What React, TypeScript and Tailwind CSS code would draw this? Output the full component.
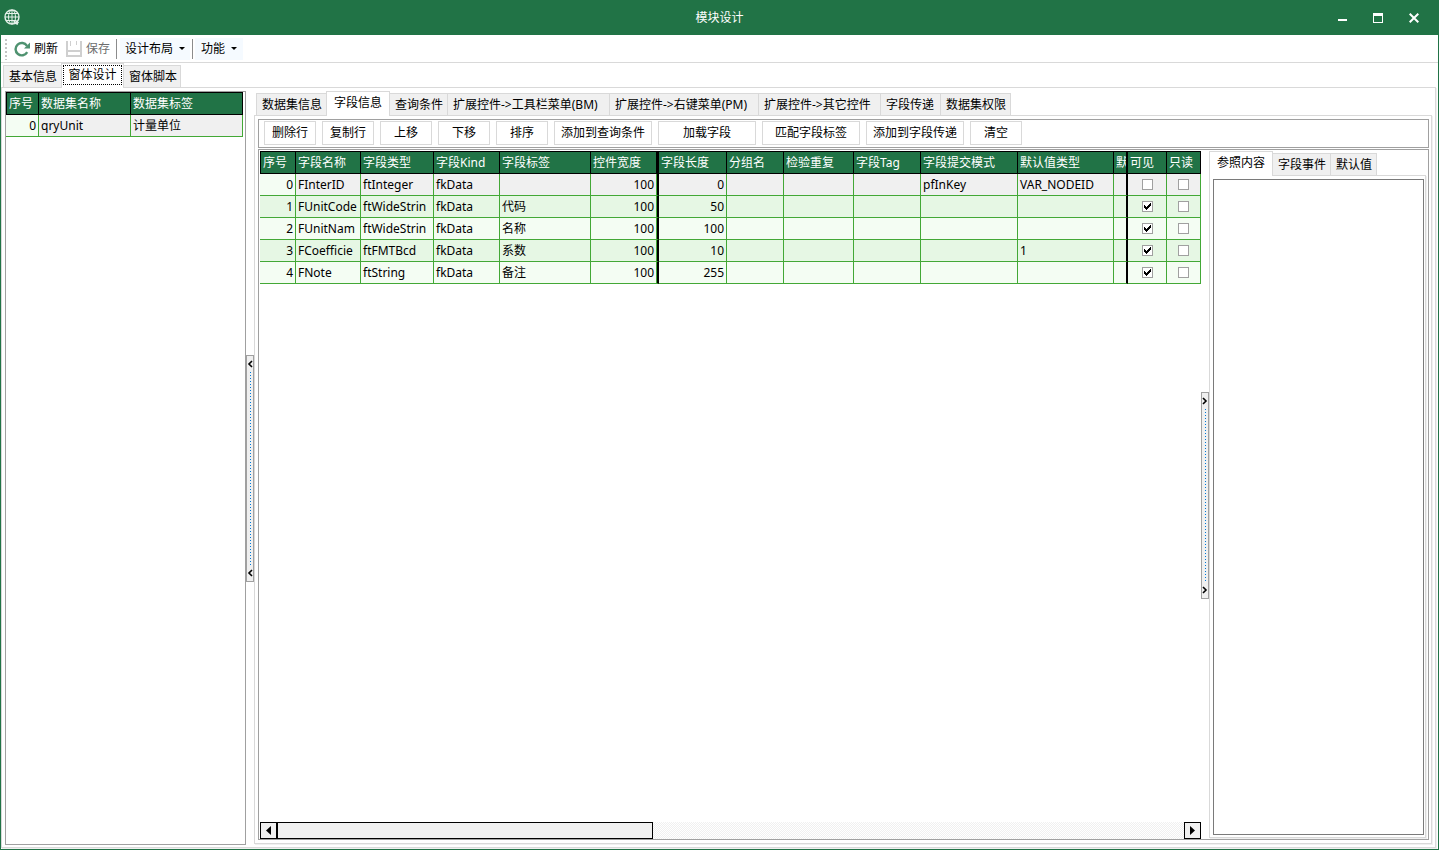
import type { ReactNode } from 'react';

interface Tab {
  label: string;
  width: string;
}

interface Column {
  key: string;
  title: string;
  width: number;
  align?: 'right' | 'center';
  divider?: 'thick' | 'double';
}

interface Field {
  [key: string]: string | number | boolean | undefined;
}

const pageTabs: Tab[] = [
  { label: '基本信息', width: 'w-[58px]' },
  { label: '窗体设计', width: 'w-[63px]' },
  { label: '窗体脚本', width: 'w-[57px]' },
];

const dataTabs: Tab[] = [
  { label: '数据集信息', width: 'w-[70px]' },
  { label: '字段信息', width: 'w-[64px]' },
  { label: '查询条件', width: 'w-[58px]' },
  { label: '扩展控件->工具栏菜单(BM)', width: 'w-[162px]' },
  { label: '扩展控件->右键菜单(PM)', width: 'w-[149px]' },
  { label: '扩展控件->其它控件', width: 'w-[122px]' },
  { label: '字段传递', width: 'w-[60px]' },
  { label: '数据集权限', width: 'w-[70px]' },
];

const detailTabs: Tab[] = [
  { label: '参照内容', width: 'w-[64px]' },
  { label: '字段事件', width: 'w-[58px]' },
  { label: '默认值', width: 'w-[46px]' },
];

const actions = [
  { label: '删除行' },
  { label: '复制行' },
  { label: '上移' },
  { label: '下移' },
  { label: '排序' },
  { label: '添加到查询条件', wide: true },
  { label: '加载字段', wide: true },
  { label: '匹配字段标签', wide: true },
  { label: '添加到字段传递', wide: true },
  { label: '清空' },
];

const columns: Column[] = [
  { key: 'no', title: '序号', width: 36, align: 'right' },
  { key: 'name', title: '字段名称', width: 65 },
  { key: 'type', title: '字段类型', width: 73 },
  { key: 'kind', title: '字段Kind', width: 66 },
  { key: 'label', title: '字段标签', width: 91 },
  { key: 'ctrlWidth', title: '控件宽度', width: 68, align: 'right', divider: 'double' },
  { key: 'length', title: '字段长度', width: 68, align: 'right' },
  { key: 'group', title: '分组名', width: 57 },
  { key: 'repeat', title: '检验重复', width: 70 },
  { key: 'tag', title: '字段Tag', width: 67 },
  { key: 'submit', title: '字段提交模式', width: 97 },
  { key: 'defType', title: '默认值类型', width: 96 },
  { key: 'def', title: '默', width: 14, divider: 'thick' },
  { key: 'visible', title: '可见', width: 39, align: 'center' },
  { key: 'readonly', title: '只读', width: 34, align: 'center' },
];

const fields: Field[] = [
  { no: 0, name: 'FInterID', type: 'ftInteger', kind: 'fkData', ctrlWidth: 100, length: 0, submit: 'pfInKey', defType: 'VAR_NODEID', visible: false, readonly: false },
  { no: 1, name: 'FUnitCode', type: 'ftWideStrin', kind: 'fkData', label: '代码', ctrlWidth: 100, length: 50, visible: true, readonly: false },
  { no: 2, name: 'FUnitNam', type: 'ftWideStrin', kind: 'fkData', label: '名称', ctrlWidth: 100, length: 100, visible: true, readonly: false },
  { no: 3, name: 'FCoefficie', type: 'ftFMTBcd', kind: 'fkData', label: '系数', ctrlWidth: 100, length: 10, defType: '1', visible: true, readonly: false },
  { no: 4, name: 'FNote', type: 'ftString', kind: 'fkData', label: '备注', ctrlWidth: 100, length: 255, visible: true, readonly: false },
];

function Tabs({ tabs, active, focused = false }: { tabs: Tab[]; active: number; focused?: boolean }) {
  return (
    <div role="tablist" className="relative z-10 -mb-px flex h-[25px] items-end">
      {tabs.map((tab, i) => (
        <button
          key={tab.label}
          role="tab"
          aria-selected={i === active}
          className={`${tab.width} shrink-0 border-[#d9d9d9] text-left whitespace-nowrap ${
            i === active
              ? `h-[25px] border-x border-t bg-white pt-px pb-[3px] ${focused ? 'px-px' : 'pl-[7px]'}`
              : `h-[23px] border-y bg-[#f0f0f0] pt-px pl-[5px] ${i < active ? 'border-l' : 'border-r'}`
          }`}
        >
          {i === active && focused ? (
            <span className="flex h-full items-center justify-center border border-dotted border-black">{tab.label}</span>
          ) : (
            tab.label
          )}
        </button>
      ))}
    </div>
  );
}

function TabPage({ className = '', children }: { className?: string; children: ReactNode }) {
  return (
    <div className={`flex min-h-0 flex-1 border border-[#d9d9d9] shadow-[1px_1px_0_#f0f0f0] ${className}`}>{children}</div>
  );
}

function Splitter({ dir, height }: { dir: 'left' | 'right'; height: string }) {
  const arrow = (
    <svg width="6" height="8" viewBox="0 0 6 8" fill="none" stroke="#000" strokeWidth="1.6">
      <path d={dir === 'left' ? 'M5 1 L2 4 L5 7' : 'M1 1 L4 4 L1 7'} />
    </svg>
  );
  return (
    <div className="flex w-2 shrink-0 items-center">
      <div className={`${height} flex w-2 flex-col items-center justify-between border border-[#a0a0a0] bg-[#f0f0f0] py-1`}>
        {arrow}
        <svg className="my-1 min-h-0 w-px flex-1" aria-hidden="true">
          <line x1="0.5" y1="0" x2="0.5" y2="100%" stroke="#0078d7" strokeDasharray="1 2" />
        </svg>
        {arrow}
      </div>
    </div>
  );
}

function CheckBox({ checked, label }: { checked: boolean; label: string }) {
  return (
    <span className="relative mx-auto block size-[11px]">
      <input
        type="checkbox"
        defaultChecked={checked}
        aria-label={label}
        className="peer block size-[11px] appearance-none border border-[#a0a0a0] bg-white"
      />
      <svg
        className="pointer-events-none absolute inset-0 hidden peer-checked:block"
        width="11"
        height="11"
        viewBox="0 0 11 11"
        shapeRendering="crispEdges"
      >
        <path d="M2 4h1v1h1v1h1v-1h1v-1h1v-1h1v-1h1v3h-1v1h-1v1h-1v1h-1v1h-1v-1h-1v-1h-1z" fill="#000" />
      </svg>
    </span>
  );
}

function DatasetList() {
  return (
    <div className="w-[241px] shrink-0 border border-[#a0a0a0]">
      <table className="w-[237px] table-fixed border-separate border-spacing-0">
        <colgroup>
          <col className="w-[33px]" />
          <col className="w-[92px]" />
          <col className="w-[112px]" />
        </colgroup>
        <thead className="bg-[#217346] text-left text-white">
          <tr>
            {['序号', '数据集名称', '数据集标签'].map((title, i) => (
              <th key={title} className={`h-[23px] border-y border-r border-black pl-0.5 font-normal ${i === 0 ? 'border-l' : ''}`}>
                {title}
              </th>
            ))}
          </tr>
        </thead>
        <tbody>
          <tr className="bg-[#f0f0f0]">
            <td className="h-[22px] border-r border-b border-[#43a836] bg-[#f4fdf3] pr-0.5 text-right">0</td>
            <td className="border-r border-b border-[#43a836] pl-0.5">qryUnit</td>
            <td className="border-r border-b border-[#43a836] pl-0.5">计量单位</td>
          </tr>
        </tbody>
      </table>
    </div>
  );
}

function FieldCell({ col, row, index }: { col: Column; row: Field; index: number }) {
  const value = row[col.key];
  const bg = index % 2 ? 'bg-[#e6f7e4]' : index === 0 && col.key !== 'no' ? 'bg-[#f0f0f0]' : 'bg-[#f4fdf3]';
  const align = col.align === 'right' ? 'text-right' : col.align === 'center' ? '' : 'pl-0.5';
  const pad = col.align !== 'right' ? '' : col.divider ? 'pr-[3px]' : 'pr-0.5';
  const shade = col.divider === 'double' ? 'shadow-[inset_-1px_0_0_#43a836]' : '';
  return (
    <td
      className={`h-[22px] overflow-hidden border-b border-b-[#43a836] whitespace-nowrap ${bg} ${align} ${pad} ${shade} ${
        col.divider ? 'border-r-2 border-r-black' : 'border-r border-r-[#43a836]'
      }`}
    >
      {typeof value === 'boolean' ? <CheckBox checked={value} label={`${row.name} ${col.title}`} /> : value}
    </td>
  );
}

function FieldGrid() {
  return (
    <table className="w-[941px] table-fixed border-separate border-spacing-0">
      <colgroup>
        {columns.map((col) => (
          <col key={col.key} style={{ width: col.width }} />
        ))}
      </colgroup>
      <thead className="bg-[#217346] text-left text-white">
        <tr>
          {columns.map((col, i) => (
            <th
              key={col.key}
              className={`h-[23px] overflow-hidden border-y border-black pl-0.5 font-normal whitespace-nowrap ${
                col.divider === 'double' ? 'border-r-3' : col.divider ? 'border-r-2' : 'border-r'
              } ${i === 0 ? 'border-l' : ''}`}
            >
              {col.title}
            </th>
          ))}
        </tr>
      </thead>
      <tbody>
        {fields.map((row, i) => (
          <tr key={i}>
            {columns.map((col) => (
              <FieldCell key={col.key} col={col} row={row} index={i} />
            ))}
          </tr>
        ))}
      </tbody>
    </table>
  );
}

function ScrollBar() {
  return (
    <div className="flex h-[17px] bg-[repeating-conic-gradient(#f0f0f0_0_25%,#fff_0_50%)] bg-[length:2px_2px]">
      <button aria-label="向左滚动" className="flex w-[17px] items-center justify-center border border-black bg-[#f0f0f0]">
        <svg width="5" height="9" viewBox="0 0 5 9">
          <path d="M5 0v9L0 4.500z" />
        </svg>
      </button>
      <div className="w-2/5 border border-black bg-[#f0f0f0]" />
      <button aria-label="向右滚动" className="ml-auto flex w-[17px] items-center justify-center border border-black bg-[#f0f0f0]">
        <svg width="5" height="9" viewBox="0 0 5 9">
          <path d="M0 0v9L5 4.500z" />
        </svg>
      </button>
    </div>
  );
}

function TitleBar() {
  return (
    <header className="relative flex h-[35px] shrink-0 items-center bg-[#217346] text-white">
      <svg className="ml-[3px]" width="17" height="17" viewBox="0 0 17 17" fill="none" stroke="#e6f1ea">
        <circle cx="8" cy="8" r="7" strokeWidth="1.4" />
        <ellipse cx="8" cy="8" rx="3.500" ry="7" />
        <path d="M8 1v14M1 8h14M2 4.500h12M2 11.500h9" />
        <path d="M10 11.500c.5 2 2 3.500 4 3.500M11 11l3.500 3" strokeWidth="1.600" />
      </svg>
      <h1 className="absolute inset-x-0 text-center">模块设计</h1>
      <div className="relative ml-auto flex pr-1.5">
        <button aria-label="最小化" className="flex w-9 justify-center pt-[5px]">
          <svg width="10" height="10" viewBox="0 0 10 10" fill="#fff">
            <path d="M1 4h9v2H1z" />
          </svg>
        </button>
        <button aria-label="最大化" className="flex w-9 items-center justify-center">
          <svg width="10" height="10" viewBox="0 0 10 10" fill="#fff">
            <path fillRule="evenodd" d="M0 0h10v10H0zM1 3v6h8V3z" />
          </svg>
        </button>
        <button aria-label="关闭" className="flex w-9 items-center justify-center">
          <svg width="10" height="10" viewBox="0 0 10 10" stroke="#fff" strokeWidth="2">
            <path d="M.7.7l8.600 8.600M9.300.7L.7 9.300" />
          </svg>
        </button>
      </div>
    </header>
  );
}

function Caret() {
  return (
    <svg width="6" height="3" viewBox="0 0 6 3" aria-hidden="true">
      <path d="M0 0h6L3 3z" />
    </svg>
  );
}

function ToolBar() {
  return (
    <div className="flex h-7 shrink-0 items-center border-b border-[#d9d9d9] pl-1">
      <svg width="2" height="22" className="mr-[7px]" aria-hidden="true">
        <line x1="1" y1="1" x2="1" y2="22" stroke="#c4c4c4" strokeWidth="2" strokeDasharray="2 2" />
      </svg>
      <button className="flex items-center gap-1">
        <svg width="16" height="16" viewBox="0 0 16 16" fill="none">
          <path d="M13.200 11.200A6.200 6.200 0 1 1 13 4.800" stroke="#4f9270" strokeWidth="2.400" />
          <path d="M16 1.500v6h-6z" fill="#4f9270" />
        </svg>
        刷新
      </button>
      <button className="ml-2 flex items-center gap-1 text-[#6d6d6d]" disabled>
        <svg width="16" height="16" viewBox="0 0 16 16" fill="#cfcfcf">
          <path d="M0 0h2v9h12V0h2v16H0zM2 11v3h12v-3z" fillRule="evenodd" />
          <path d="M4 0h1v5H4zM10 0h1v4h-1z" />
        </svg>
        保存
      </button>
      <span className="mr-[3px] ml-1.5 h-5 border-l border-[#8c8c8c]" />
      <button className="flex h-[22px] items-center gap-1.5 bg-[#f5faff] px-[5px]">
        设计布局
        <Caret />
      </button>
      <span className="mx-0.5 h-5 border-l border-[#8c8c8c]" />
      <button className="flex h-[22px] items-center gap-1.5 bg-[#f5faff] px-1.5">
        功能
        <Caret />
      </button>
    </div>
  );
}

export default function App() {
  return (
    <div className="flex h-screen flex-col border-x border-b border-[#217346] bg-white font-['Noto_Sans','Noto_Sans_CJK_SC',sans-serif] text-[12px] leading-[18px] text-black">
      <TitleBar />
      <ToolBar />
      <main className="flex min-h-0 flex-1 flex-col pr-0.5 pb-px">
        <div className="pl-0.5">
          <Tabs tabs={pageTabs} active={1} focused />
        </div>
        <TabPage className="p-[3px] pb-0.5">
          <DatasetList />
          <Splitter dir="left" height="h-[227px]" />
          <section className="flex min-w-0 flex-1 flex-col pb-px">
            <div className="pl-0.5">
              <Tabs tabs={dataTabs} active={1} />
            </div>
            <TabPage className="flex-col gap-px p-[3px] pr-0.5">
              <div className="flex h-[29px] shrink-0 gap-1.5 border border-[#a0a0a0] px-[5px] pt-px">
                {actions.map((action) => (
                  <button
                    key={action.label}
                    className={`h-6 shrink-0 border border-[#d9d9d9] bg-white ${action.wide ? 'w-[98px]' : 'w-[52px]'}`}
                  >
                    {action.label}
                  </button>
                ))}
              </div>
              <div className="flex min-h-0 flex-1 border border-[#a0a0a0] p-px pr-0.5 pb-0">
                <div className="flex min-w-0 flex-1 flex-col justify-between overflow-hidden">
                  <FieldGrid />
                  <ScrollBar />
                </div>
                <Splitter dir="right" height="h-[207px]" />
                <aside className="flex w-[217px] shrink-0 flex-col pb-px">
                  <Tabs tabs={detailTabs} active={0} />
                  <TabPage className="p-[3px] pr-px pb-0.5">
                    <textarea aria-label="参照内容" className="min-w-0 flex-1 resize-none border border-[#7a7a7a] bg-white outline-none" />
                  </TabPage>
                </aside>
              </div>
            </TabPage>
          </section>
        </TabPage>
      </main>
    </div>
  );
}
